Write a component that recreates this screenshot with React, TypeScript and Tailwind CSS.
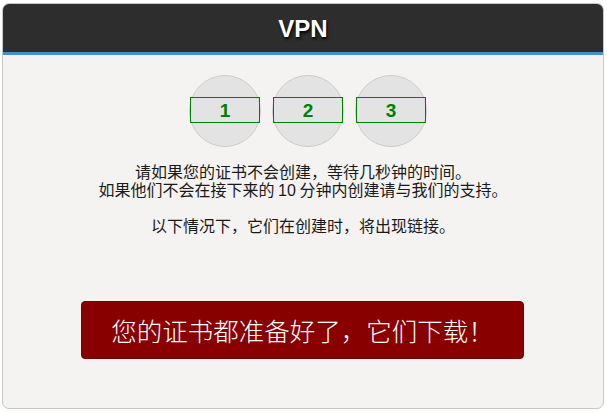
import React from "react";

function Step({ n }: { n: string }) {
  return (
    <div className="relative w-[72px] h-[72px] rounded-full bg-[#e3e3e3] border border-[#cbcbcb] flex items-center justify-center">
      <div className="w-[71px] h-[26px] -mt-[2px] border border-[#008000] flex items-center justify-center text-[#008000] text-[19px] font-bold leading-none" style={{ fontFamily: '"Liberation Sans", Arial, sans-serif' }}>
        {n}
      </div>
    </div>
  );
}

export default function App() {
  return (
    <div className="w-[607px] h-[413px] bg-white pt-[3px] pl-[2px] pr-[3px] pb-[4px]">
      <div className="w-full h-full flex flex-col rounded-[7px] border border-[#c6c6c6] overflow-hidden bg-[#f4f3f1]">
        <div className="h-[48px] bg-[#2d2d2d] flex items-center justify-center">
          <span
            className="text-white text-[24px] font-bold leading-none mt-[2px]"
            style={{ fontFamily: '"Liberation Sans", Arial, sans-serif', textShadow: "1px 2px 3px #000" }}
          >
            VPN
          </span>
        </div>
        <div className="h-[3px] bg-[#4391cf]" />
        <div className="flex-1 flex flex-col items-center">
          <div className="flex gap-[11px] pl-[10px] mt-[20px]">
            <Step n="1" />
            <Step n="2" />
            <Step n="3" />
          </div>
          <div
            className="mt-[15px] text-center text-[16px] leading-[18px] text-[#1a1a1a]"
            style={{ fontFamily: '"Noto Sans CJK SC", "Liberation Sans", sans-serif' }}
          >
            <div className="h-[18px]">请如果您的证书不会创建，等待几秒钟的时间。</div>
            <div className="h-[18px]">
              如果他们不会在接下来的 <span style={{ fontFamily: '"Liberation Sans", Arial, sans-serif' }}>10</span> 分钟内创建请与我们的支持。
            </div>
            <div className="h-[18px]"></div>
            <div className="h-[18px]">以下情况下，它们在创建时，将出现链接。</div>
          </div>
          <div
            className="mt-[67px] w-[443px] h-[58px] ml-[-1px] rounded-[4px] bg-[#880000] border border-[#780000] flex items-center justify-center text-white text-[25.5px] leading-none"
            style={{ fontFamily: '"Noto Sans CJK SC", sans-serif', fontWeight: 300 }}
          >
            您的证书都准备好了，它们下载！
          </div>
        </div>
      </div>
    </div>
  );
}
